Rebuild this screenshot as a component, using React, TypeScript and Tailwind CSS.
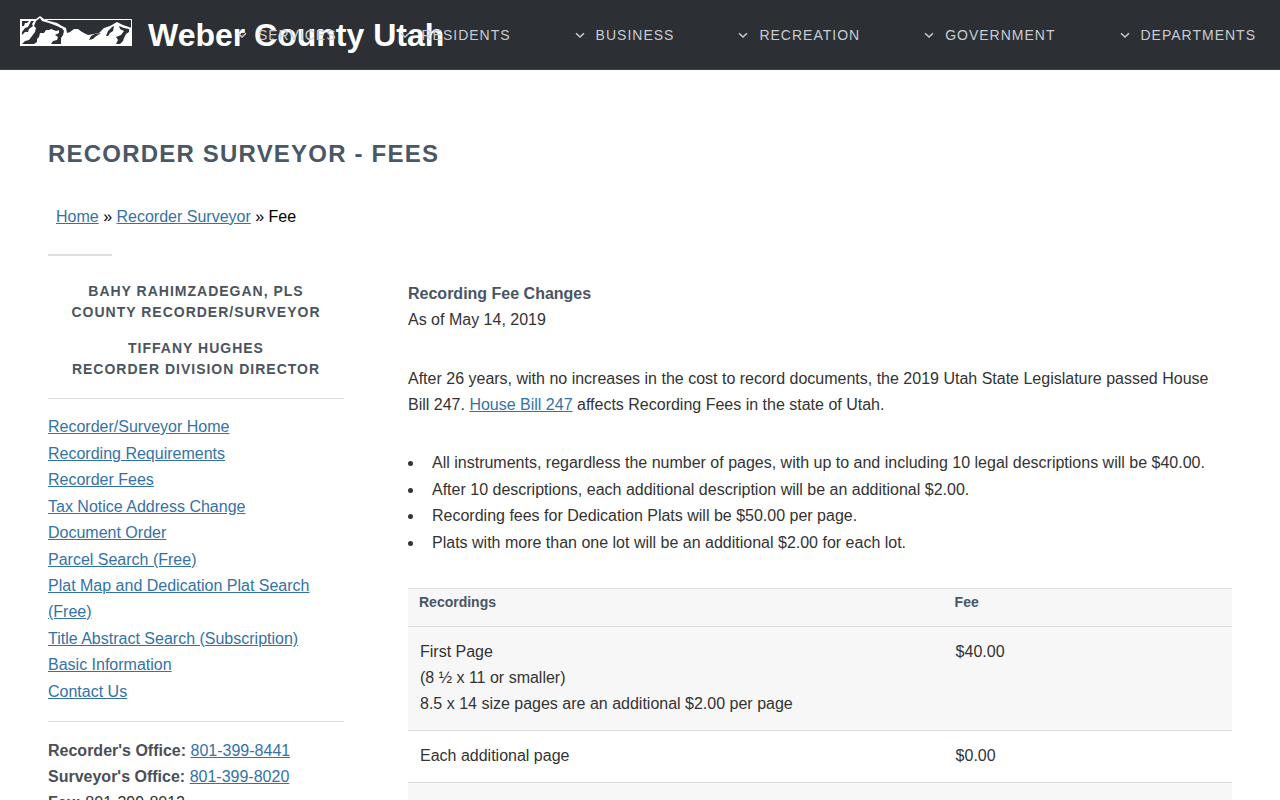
import React from "react";

const navItems = [
  "Services",
  "Residents",
  "Business",
  "Recreation",
  "Government",
  "Departments",
];

const sideLinks = [
  "Recorder/Surveyor Home",
  "Recording Requirements",
  "Recorder Fees",
  "Tax Notice Address Change",
  "Document Order",
  "Parcel Search (Free)",
  "Plat Map and Dedication Plat Search (Free)",
  "Title Abstract Search (Subscription)",
  "Basic Information",
  "Contact Us",
];

const feeChanges = [
  "All instruments, regardless the number of pages, with up to and including 10 legal descriptions will be $40.00.",
  "After 10 descriptions, each additional description will be an additional $2.00.",
  "Recording fees for Dedication Plats will be $50.00 per page.",
  "Plats with more than one lot will be an additional $2.00 for each lot.",
];

const fees = [
  {
    lines: [
      "First Page",
      "(8 ½ x 11 or smaller)",
      "8.5 x 14 size pages are an additional $2.00 per page",
    ],
    fee: "$40.00",
  },
  { lines: ["Each additional page"], fee: "$0.00" },
  { lines: [""], fee: "" },
];

const linkClass = "text-[#3472a6] underline";

const MountainLogo = () => (
  <svg
    className="w-28 h-8 shrink-0"
    viewBox="0 0 112 32"
    fill="none"
    aria-hidden="true"
  >
    {/* snow */}
    <path
      fill="#fff"
      d="M0 4H16L20 1L24 4L29 6L37 8L42 11L46 13L47 18L50 17L54 14L58 14L62 17L68 20L74 19L79 18L84 13L90 11L97 7L103 10L112 13V31H0Z"
    />
    {/* rock faces */}
    <g fill="#2c3034">
      <path d="M2 6H9L7 8L5 8L4 11H2ZM11 6L14 6L12 9L13 11L9 14L8 17L5 17L2 20V17L5 13L8 12Z" />
      <path d="M20 3L22 6L29 8L37 11L41 13L40 15L36 16L31 14L29 15L26 15L24 18L20 18L19 22L17 24L17 27L14 29H2L5 26L9 25L12 21L15 17L16 13L14 11L16 6Z" />
      <path d="M39 14L42 13L44 16L43 20L41 23L41 29H31L33 26L37 25L38 22L35 20L39 18Z" />
      <path d="M81 18L78 20L75 22L73 24L69 25L71 21L75 19ZM92 12L94 11L93 16L90 18L88 21H86L88 16ZM99 11L104 13L109 14L109 17L106 19L104 23L103 26L100 29H96L98 25L96 22L101 20L104 16L100 14Z" />
    </g>
    {/* frame */}
    <path stroke="#fff" d="M25 4.5H111.5V30M0.5 4V31" />
  </svg>
);

const Header = () => (
  <header className="grid h-[70px] items-center bg-[#2c3034] border-b border-[#3f4347]">
    <a
      href="#"
      className="col-start-1 row-start-1 flex items-center gap-4 pl-5 text-[32px] leading-10 font-bold text-white whitespace-nowrap"
    >
      <span className="pb-2">
        <MountainLogo />
      </span>
      Weber County Utah
    </a>
    <nav className="col-start-1 row-start-1 flex justify-end gap-16 pr-6">
      {navItems.map((item) => (
        <a
          key={item}
          href="#"
          className="flex items-center gap-[11px] text-sm leading-5 tracking-[1px] uppercase text-[#c8ccd2]"
        >
          <svg
            className="w-[10px] h-[10px]"
            viewBox="0 0 10 10"
            fill="none"
            stroke="currentColor"
            strokeWidth="1.5"
            aria-hidden="true"
          >
            <path d="M1 3.2L5 7L9 3.2" />
          </svg>
          {item}
        </a>
      ))}
    </nav>
  </header>
);

const Sidebar = () => (
  <aside className="w-[296px] shrink-0">
    <div className="flex flex-col gap-[15px] text-center text-sm leading-[21px] font-bold tracking-[1px] uppercase text-[#4a545e]">
      <h2>
        Bahy Rahimzadegan, PLS
        <br />
        County Recorder/Surveyor
      </h2>
      <h2>
        Tiffany Hughes
        <br />
        Recorder Division Director
      </h2>
    </div>
    <hr className="mt-[18px] mb-[15px] border-[#dcdcdc]" />
    <ul>
      {sideLinks.map((link) => (
        <li key={link} className="odd:pb-px">
          <a href="#" className={linkClass}>
            {link}
          </a>
        </li>
      ))}
    </ul>
    <hr className="my-4 border-[#dcdcdc]" />
    <p>
      <b className="text-[#4a4f56]">Recorder's Office:</b>{" "}
      <a href="#" className={linkClass}>
        801-399-8441
      </a>
      <br />
      <b className="text-[#4a4f56]">Surveyor's Office:</b>{" "}
      <a href="#" className={linkClass}>
        801-399-8020
      </a>
      <br />
      <b className="text-[#4a4f56]">Fax:</b> 801-399-8012
    </p>
  </aside>
);

const FeeTable = () => (
  <table className="mt-8 w-full table-fixed border-collapse text-left">
    <thead>
      <tr className="bg-[#f7f7f7] border-y border-[#dcdcdc] text-sm leading-5 text-[#4a5566]">
        <th className="w-[65%] px-[11px] pt-[3px] pb-[14px]">Recordings</th>
        <th className="px-[11px] pt-[3px] pb-[14px]">Fee</th>
      </tr>
    </thead>
    <tbody>
      {fees.map((row) => (
        <tr
          key={row.lines[0]}
          className="border-b border-[#dcdcdc] align-top odd:bg-[#f7f7f7]"
        >
          <td className="px-3 pt-3 pb-[13px]">
            {row.lines.map((line) => (
              <p key={line}>{line}</p>
            ))}
          </td>
          <td className="px-3 pt-3 pb-[13px]">{row.fee}</td>
        </tr>
      ))}
    </tbody>
  </table>
);

const App = () => {
  return (
    <div className="h-screen overflow-hidden bg-white font-['Liberation_Sans',Arial,sans-serif] text-base leading-[26px] text-[#333]">
      <Header />
      <div className="px-12 pt-16">
        <h1 className="text-2xl leading-10 font-bold tracking-wider uppercase text-[#4a5866]">
          Recorder Surveyor - Fees
        </h1>
        <p className="mt-[30px] px-2 text-black">
          <a href="#" className={linkClass}>
            Home
          </a>{" "}
          »{" "}
          <a href="#" className={linkClass}>
            Recorder Surveyor
          </a>{" "}
          » Fee
        </p>
        <div className="mt-6 h-[2px] w-16 bg-[#e0e0e0]" />
        <div className="mt-[25px] flex gap-16">
          <Sidebar />
          <main className="min-w-0 flex-1">
            <h3 className="font-bold text-[#4a5464]">Recording Fee Changes</h3>
            <p>As of May 14, 2019</p>
            <p className="mt-[33px]">
              After 26 years, with no increases in the cost to record documents,
              the 2019 Utah State Legislature passed House Bill 247.{" "}
              <a href="#" className={linkClass}>
                House Bill 247
              </a>{" "}
              affects Recording Fees in the state of Utah.
            </p>
            <ul className="mt-8 list-disc list-outside pl-4">
              {feeChanges.map((change) => (
                <li key={change} className="pl-2 odd:pb-px">
                  {change}
                </li>
              ))}
            </ul>
            <FeeTable />
          </main>
        </div>
      </div>
    </div>
  );
};

export default App;
